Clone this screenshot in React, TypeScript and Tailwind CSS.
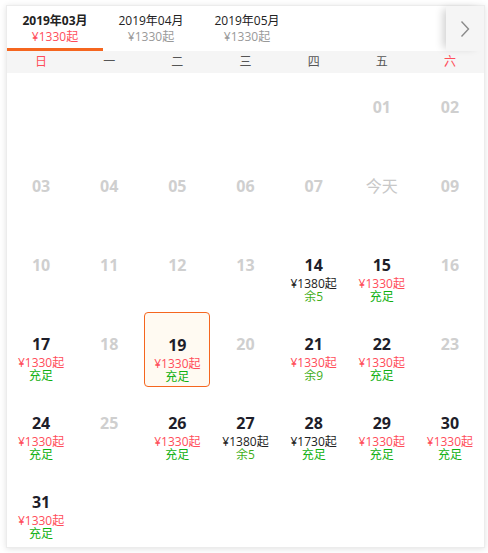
import React from "react";

type Cell =
  | null
  | { d: string; dis?: boolean; price?: string; red?: boolean; st?: string; sel?: boolean; today?: boolean };

const rows: Cell[][] = [
  [null, null, null, null, null, { d: "01", dis: true }, { d: "02", dis: true }],
  [
    { d: "03", dis: true },
    { d: "04", dis: true },
    { d: "05", dis: true },
    { d: "06", dis: true },
    { d: "07", dis: true },
    { d: "今天", dis: true, today: true },
    { d: "09", dis: true },
  ],
  [
    { d: "10", dis: true },
    { d: "11", dis: true },
    { d: "12", dis: true },
    { d: "13", dis: true },
    { d: "14", price: "¥1380起", st: "余5" },
    { d: "15", price: "¥1330起", red: true, st: "充足" },
    { d: "16", dis: true },
  ],
  [
    { d: "17", price: "¥1330起", red: true, st: "充足" },
    { d: "18", dis: true },
    { d: "19", price: "¥1330起", red: true, st: "充足", sel: true },
    { d: "20", dis: true },
    { d: "21", price: "¥1330起", red: true, st: "余9" },
    { d: "22", price: "¥1330起", red: true, st: "充足" },
    { d: "23", dis: true },
  ],
  [
    { d: "24", price: "¥1330起", red: true, st: "充足" },
    { d: "25", dis: true },
    { d: "26", price: "¥1330起", red: true, st: "充足" },
    { d: "27", price: "¥1380起", st: "余5" },
    { d: "28", price: "¥1730起", st: "充足" },
    { d: "29", price: "¥1330起", red: true, st: "充足" },
    { d: "30", price: "¥1330起", red: true, st: "充足" },
  ],
  [{ d: "31", price: "¥1330起", red: true, st: "充足" }, null, null, null, null, null, null],
];

const weekdays = ["日", "一", "二", "三", "四", "五", "六"];

export default function App() {
  return (
    <div
      className="w-[488px] h-[553px] bg-white pt-[5px] pl-[6px]"
      style={{ fontFamily: '"Open Sans", "Noto Sans CJK SC", sans-serif' }}
    >
      <div className="w-[479px] h-[543px] bg-white border border-[#ececec] shadow-[0_1px_6px_rgba(0,0,0,0.12)] flex flex-col">
        {/* tabs */}
        <div className="h-[46px] flex relative">
          <div className="w-[96px] flex flex-col items-center pt-[7px] border-b-[3px] border-[#f5661f]">
            <div className="text-[12px] leading-[16px] font-bold text-[#222]">2019年03月</div>
            <div className="text-[12px] leading-[16px] text-[#ff4d5a]">¥1330起</div>
          </div>
          <div className="w-[96px] flex flex-col items-center pt-[7px]">
            <div className="text-[12px] leading-[16px] text-[#222]">2019年04月</div>
            <div className="text-[12px] leading-[16px] text-[#999]">¥1330起</div>
          </div>
          <div className="w-[96px] flex flex-col items-center pt-[7px]">
            <div className="text-[12px] leading-[16px] text-[#222]">2019年05月</div>
            <div className="text-[12px] leading-[16px] text-[#999]">¥1330起</div>
          </div>
          <div className="flex-1" />
          <div className="w-[38px] h-[45px] bg-[#f5f5f5] flex items-center justify-center shadow-[-6px_0_8px_-3px_rgba(0,0,0,0.18)]">
            <svg width="10" height="18" viewBox="0 0 10 18" fill="none">
              <path d="M1.5 1.5 L8.5 9 L1.5 16.5" stroke="#8a8a8a" strokeWidth="1.4" />
            </svg>
          </div>
        </div>
        {/* weekday header */}
        <div className="h-[22px] bg-[#f5f5f5] grid grid-cols-7 items-center">
          {weekdays.map((w, i) => (
            <div
              key={w}
              className={`text-center text-[12px] leading-[22px] ${i === 0 || i === 6 ? "text-[#ff4d5a]" : "text-[#555]"}`}
            >
              {w}
            </div>
          ))}
        </div>
        {/* days */}
        <div className="grid grid-cols-7 grid-rows-6 flex-1">
          {rows.flat().map((c, i) => (
            <div key={i} className="py-[2px] px-[1px] h-[79px]">
              {c && (
                <div
                  className={`h-full flex flex-col items-center pt-[20px] rounded-[4px] ${
                    c.sel ? "border border-[#f5661f] bg-[#fffaf2] pt-[19px]" : ""
                  }`}
                >
                  <div
                    className={`text-[16px] leading-[24px] ${
                      c.today ? "font-normal text-[#c8c8c8]" : c.dis ? "font-bold text-[#cfcfcf]" : "font-bold text-[#1e1e2a]"
                    }`}
                  >
                    {c.d}
                  </div>
                  {c.price && (
                    <div className={`text-[12px] leading-[13px] ${c.red ? "text-[#ff4d5a]" : "text-[#222]"}`}>
                      {c.price}
                    </div>
                  )}
                  {c.st && (
                    <div className={`text-[12px] leading-[13px] ${c.st === "充足" ? "text-[#10b010]" : "text-[#3fae1a]"}`}>
                      {c.st}
                    </div>
                  )}
                </div>
              )}
            </div>
          ))}
        </div>
      </div>
    </div>
  );
}
